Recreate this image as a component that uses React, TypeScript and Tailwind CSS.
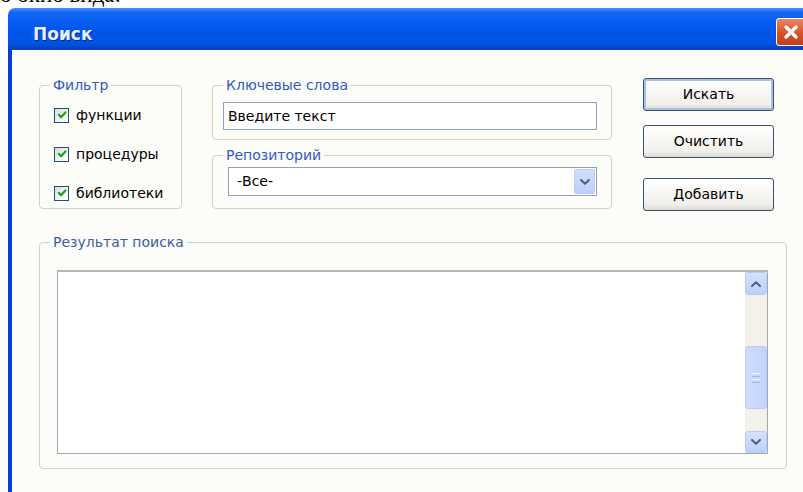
import { X } from 'lucide-react'

// XP-style "Поиск" dialog: filter checkboxes, keyword/repository boxes, actions and results list

function XpCheckbox({ label }: { label: string }) {
  return (
    <label className="flex items-center gap-[7px] h-[18px] text-[14px] leading-[18px] text-black">
      <span className="w-[15px] h-[15px] border border-[#1c5180] bg-[linear-gradient(135deg,#dcdcd5,#f8f8f5_70%,#ffffff)] flex items-center justify-center">
        <svg viewBox="0 0 10 10" className="w-[10px] h-[10px]">
          <path d="M1.8 4.8 L4 7.2 L8.4 2.4" stroke="#21a121" strokeWidth="2.2" fill="none" strokeLinecap="round" strokeLinejoin="round" />
        </svg>
      </span>
      {label}
    </label>
  )
}

function Chevron({ up = false }: { up?: boolean }) {
  return (
    <svg viewBox="0 0 10 6" className="w-[10px] h-[6px]">
      <path
        d={up ? 'M1 5 L5 1.2 L9 5' : 'M1 1 L5 4.8 L9 1'}
        stroke="#4d6185"
        strokeWidth="2"
        fill="none"
        strokeLinecap="round"
        strokeLinejoin="round"
      />
    </svg>
  )
}

function XpButton({ label, isDefault = false }: { label: string; isDefault?: boolean }) {
  return (
    <button
      className={
        isDefault
          ? 'w-[131px] h-[33px] rounded-[3px] border border-[#3b5170] bg-[linear-gradient(#ffffff,#f1f0ec_80%,#dedbd2)] shadow-[inset_0_0_0_2px_#a8c0ec] text-[14px] text-black'
          : 'w-[131px] h-[33px] rounded-[3px] border border-[#3b5170] bg-[linear-gradient(#ffffff,#f1f0ec_80%,#dedbd2)] text-[14px] text-black'
      }
    >
      {label}
    </button>
  )
}

export default function App() {
  return (
    <div className="w-[803px] h-[492px] overflow-hidden bg-white font-['DejaVu_Sans',sans-serif]">
      {/* tail of the line above the window */}
      <div className="h-[8px] overflow-hidden">
        <p className="-mt-[16px] font-['Liberation_Serif',serif] text-[23px] leading-[22px] text-black whitespace-nowrap">
          о окно вида:
        </p>
      </div>

      <div className="ml-[8px] w-[812px] h-[484px] flex flex-col rounded-tl-[7px] overflow-hidden">
        {/* Title bar */}
        <div className="h-[42px] flex items-start bg-[linear-gradient(to_bottom,#4a93fa_0%,#1466f4_10%,#0058ee_45%,#0053e4_85%,#0a3fb8_100%)]">
          <span className="pl-[25px] pt-[16px] text-[17px] leading-[20px] font-bold text-[#e6efff] [text-shadow:1px_1px_0_#0a2a8c]">
            Поиск
          </span>
          <button className="ml-auto mr-[14px] mt-[10px] w-[30px] h-[28px] rounded-[3px] border border-white bg-[linear-gradient(#eb8660,#d4532c_55%,#c2401c)] flex items-center justify-center">
            <X className="w-[20px] h-[20px] text-white" strokeWidth={4} />
          </button>
        </div>

        <div className="flex flex-1">
          <div className="w-[4px] bg-[#0b3ad6]" />
          <div className="flex-1 bg-[#fcfcf9]">
            {/* Top row */}
            <div className="flex items-start pt-[27px]">
              <fieldset className="ml-[27px] w-[143px] h-[132px] border border-[#d3d1c4] rounded-[4px] px-[10px]">
                <legend className="px-[3px] text-[14px] leading-[16px] text-[#2f5bc4]">Фильтр</legend>
                <div className="flex flex-col gap-[21px] mt-[13px] pl-[4px]">
                  <XpCheckbox label="функции" />
                  <XpCheckbox label="процедуры" />
                  <XpCheckbox label="библиотеки" />
                </div>
              </fieldset>

              <div className="ml-[30px] w-[400px] flex flex-col gap-[7px]">
                <fieldset className="h-[63px] border border-[#d3d1c4] rounded-[4px] px-[10px]">
                  <legend className="px-[3px] text-[14px] leading-[16px] text-[#2f5bc4]">Ключевые слова</legend>
                  <input
                    readOnly
                    value="Введите текст"
                    className="mt-[9px] w-[374px] h-[28px] border border-[#8ea2b8] bg-white px-[4px] text-[14px] text-black outline-none"
                  />
                </fieldset>
                <fieldset className="h-[62px] border border-[#d3d1c4] rounded-[4px] px-[10px]">
                  <legend className="px-[3px] text-[14px] leading-[16px] text-[#2f5bc4]">Репозиторий</legend>
                  <div className="mt-[4px] ml-[5px] w-[369px] h-[29px] border border-[#8ea2b8] bg-white flex items-stretch">
                    <span className="flex-1 pl-[8px] text-[14px] leading-[27px] text-black">-Все-</span>
                    <span className="m-[1px] w-[21px] rounded-[2px] border border-[#bccdf5] bg-[linear-gradient(#d3defc,#bccffa)] flex items-center justify-center">
                      <Chevron />
                    </span>
                  </div>
                </fieldset>
              </div>

              <div className="ml-[31px] mt-[1px] flex flex-col">
                <XpButton label="Искать" isDefault />
                <div className="mt-[14px]">
                  <XpButton label="Очистить" />
                </div>
                <div className="mt-[20px]">
                  <XpButton label="Добавить" />
                </div>
              </div>
            </div>

            {/* Results */}
            <fieldset className="mt-[23px] ml-[27px] w-[748px] h-[235px] border border-[#d3d1c4] rounded-[4px] px-[10px]">
              <legend className="px-[3px] text-[14px] leading-[16px] text-[#3f5c9e]">Результат поиска</legend>
              <div className="mt-[20px] ml-[7px] w-[711px] h-[184px] border border-[#a3a9b1] border-t-[2px] border-t-[#b3b7bd] bg-white flex">
                <div className="flex-1" />
                <div className="w-[22px] bg-[#f3f1e9] flex flex-col">
                  <div className="h-[23px] rounded-[3px] border border-[#b8cbf6] bg-[linear-gradient(#d6e1fd,#bdd0fa)] flex items-center justify-center">
                    <Chevron up />
                  </div>
                  <div className="flex-1 flex flex-col pt-[51px] pb-[20px]">
                    <div className="h-[63px] rounded-[3px] border border-[#b8cbf6] bg-[linear-gradient(to_right,#cfdcfd,#c3d3fb)] flex flex-col items-center justify-center gap-[2px]">
                      <span className="w-[8px] h-[1px] bg-[#eef3ff]" />
                      <span className="w-[8px] h-[1px] bg-[#9fb6ea]" />
                      <span className="w-[8px] h-[1px] bg-[#eef3ff]" />
                      <span className="w-[8px] h-[1px] bg-[#9fb6ea]" />
                    </div>
                  </div>
                  <div className="h-[22px] rounded-[3px] border border-[#b8cbf6] bg-[linear-gradient(#d6e1fd,#bdd0fa)] flex items-center justify-center">
                    <Chevron />
                  </div>
                </div>
              </div>
            </fieldset>
          </div>
        </div>
      </div>
    </div>
  )
}
